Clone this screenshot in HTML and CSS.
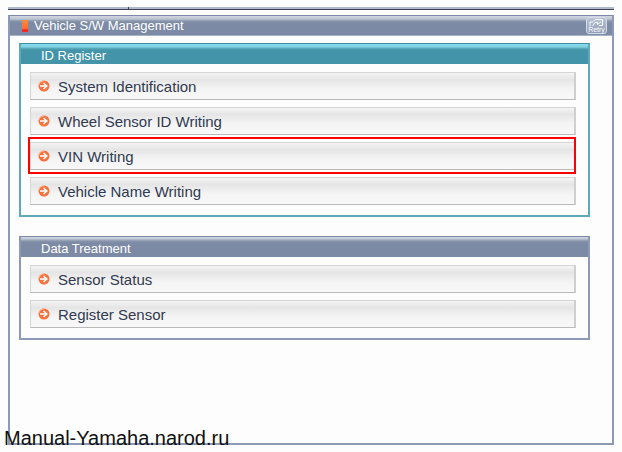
FILE: index.html
```html
<!DOCTYPE html>
<html lang="en">
<head>
    <meta charset="utf-8">
    <title>Vehicle S/W Management</title>
    <link rel="stylesheet" href="styles.css">
</head>
<body>
    <!-- shared arrow bullet -->
    <svg class="sprite" width="0" height="0" aria-hidden="true">
        <symbol id="arrow" viewBox="0 0 12 12">
            <circle cx="6" cy="6" r="5.5" fill="#f9703a"/>
            <path d="M1 5 A5 5 0 0 1 6 1" fill="none" stroke="#fbb79a" stroke-width="1"/>
            <path d="M2 6 H8.5 M5.5 3 L8.8 6 L5.5 9" fill="none" stroke="#fff" stroke-width="1.6"/>
        </symbol>
    </svg>

    <div class="top-strip"><div class="top-cell"></div></div>

    <main class="window">
        <header class="title-bar">
            <span class="marker"></span>
            <h1>Vehicle S/W Management</h1>
            <button class="retry" type="button" aria-label="Retry">
                <svg width="15" height="8" viewBox="0 0 15 8">
                    <path d="M1 7.5 V3 H4 M3.5 7 L6 3.5 H8.5 V5.5 L12 2.8 M4.5 2 L6.5 .6 H13.5 V6.5 H10" fill="none" stroke="#f7f9fc" stroke-width="1"/>
                </svg>
                <span>Retry</span>
            </button>
        </header>

        <div class="content">
            <section class="group active">
                <h2>ID Register</h2>
                <div class="items">
                    <button class="item" type="button"><svg class="icon"><use href="#arrow"/></svg>System Identification</button>
                    <button class="item" type="button"><svg class="icon"><use href="#arrow"/></svg>Wheel Sensor ID Writing</button>
                    <button class="item selected" type="button"><svg class="icon"><use href="#arrow"/></svg>VIN Writing</button>
                    <button class="item" type="button"><svg class="icon"><use href="#arrow"/></svg>Vehicle Name Writing</button>
                </div>
            </section>

            <section class="group">
                <h2>Data Treatment</h2>
                <div class="items">
                    <button class="item" type="button"><svg class="icon"><use href="#arrow"/></svg>Sensor Status</button>
                    <button class="item" type="button"><svg class="icon"><use href="#arrow"/></svg>Register Sensor</button>
                </div>
            </section>
        </div>
    </main>

    <div class="watermark">Manual-Yamaha.narod.ru</div>
</body>
</html>
```

FILE: styles.css
```css
* {
    box-sizing: border-box;
}

body {
    display: flex;
    flex-direction: column;
    gap: 5px;
    min-height: 100vh;
    margin: 0;
    padding: 7px 8px;
    background: #fdfdfd;
    font-family: "Liberation Sans", Arial, sans-serif;
}

h1,
h2 {
    margin: 0;
    color: #fff;
    font-size: 13px;
    font-weight: normal;
    line-height: 16px;
}

.sprite {
    position: absolute;
}

.top-strip {
    height: 3px;
    background: #adbad0;
    border-bottom: 1px solid #3f4252;
}

.top-cell {
    width: 20%;
    height: 2px;
    border-right: 1px solid #3f4252;
}

.window {
    flex: 1;
    border: 2px solid #8c9ab5;
    border-top: 1px solid #7c8aa7;
}

.title-bar {
    display: flex;
    align-items: center;
    height: 20px;
    padding: 0 5px 0 12px;
    background: linear-gradient(#d0d6df 0, #bcc5d2 3px, #8995ac 5px, #7c8aa5 7px);
    border-bottom: 1px solid #a9b3c6;
}

.title-bar h1 {
    flex: 1;
}

.marker {
    width: 6px;
    height: 12px;
    margin-right: 6px;
    background: linear-gradient(#ff8a3c, #ff6a30 75%, #f02c22 80%);
}

.retry {
    display: flex;
    flex-direction: column;
    align-items: center;
    width: 21px;
    height: 17px;
    padding: 1px 0 0;
    background: linear-gradient(#bac5d5, #8e9bb4);
    border: 1px solid #d5dce7;
    border-radius: 3px;
    color: #fff;
    font-family: inherit;
    font-size: 7px;
    line-height: 6px;
}

.content {
    display: flex;
    flex-direction: column;
    gap: 19px;
    padding: 7px 22px 7px 9px;
}

.group {
    border: 2px solid #8c9ab5;
    border-top: 1px solid #7c8aa7;
}

.group h2 {
    height: 20px;
    padding: 4px 0 0 20px;
    background: linear-gradient(#d0d6df 0, #bcc5d2 2px, #8995ac 4px, #7c8aa5 6px);
}

.group.active {
    border-color: #5fa9b9;
    border-top-color: #3f8c9e;
}

.group.active h2 {
    background: linear-gradient(#86dceb 0, #7ed0df 3px, #4b9cae 5px, #4394a8 7px);
}

.items {
    display: flex;
    flex-direction: column;
    gap: 7px;
    padding: 8px 12px 10px 9px;
}

.item {
    position: relative;
    display: flex;
    align-items: center;
    gap: 8px;
    height: 28px;
    padding: 0 8px 0 7px;
    background: linear-gradient(#f4f4f4, #e5e5e5 25%, #f4f4f4 60%, #f8f8f8);
    border: 1px solid #d5d5d5;
    border-right: 2px solid #cfcfcf;
    border-bottom-color: #bababa;
    color: #303a52;
    font-family: inherit;
    font-size: 15px;
    text-align: left;
}

/* red frame around the chosen entry */
.item.selected::after {
    content: "";
    position: absolute;
    inset: -6px -2px -5px -3px;
    border: 2px solid #fe0000;
}

.icon {
    width: 12px;
    height: 12px;
}

.watermark {
    position: absolute;
    bottom: 3px;
    left: 4px;
    color: #111;
    font-size: 20px;
    line-height: 22px;
}
```
